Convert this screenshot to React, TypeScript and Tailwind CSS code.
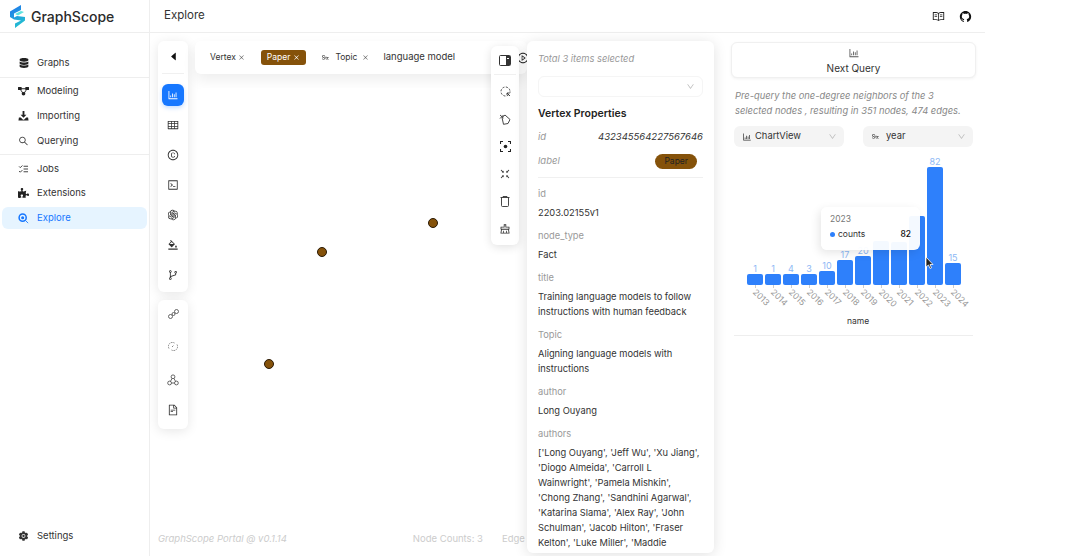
import type { ReactNode } from 'react'
import {
  AiFillSetting,
  AiOutlineBarChart,
  AiOutlineBgColors,
  AiOutlineBranches,
  AiOutlineCaretLeft,
  AiOutlineClear,
  AiOutlineClose,
  AiOutlineCode,
  AiOutlineCopyright,
  AiOutlineDown,
  AiOutlineFieldString,
  AiOutlineFileText,
  AiOutlineFullscreenExit,
  AiOutlineGithub,
  AiOutlinePlayCircle,
  AiOutlineRead,
  AiOutlineSearch,
  AiOutlineTable,
} from 'react-icons/ai'
import { FaDatabase, FaPuzzlePiece } from 'react-icons/fa'
import { PiOpenAiLogo } from 'react-icons/pi'
import { LuListChecks } from 'react-icons/lu'

const FONT = "font-['Inter','Noto_Sans',sans-serif]"

function ModelingIcon() {
  return (
    <svg width="12" height="12" viewBox="0 0 12 12" fill="#222">
      <rect x="0" y="1.500" width="4" height="3.500" rx="0.500" />
      <rect x="8" y="1.500" width="4" height="3.500" rx="0.500" />
      <circle cx="6" cy="9" r="2" />
      <path d="M3 3h6v1H3zM3.200 4.500l2.500 3.500-.8.500L2.500 5zM8.800 4.500l-2.500 3.500.8.500L9.500 5z" />
    </svg>
  )
}

function ImportIcon() {
  return (
    <svg width="12" height="12" viewBox="0 0 12 12" fill="#222">
      <path d="M5 0.500h2v4h2.200L6 8 2.800 4.500H5z" />
      <path d="M1 7.500h2L5.500 10h1L9 7.500h2l.500 3.500H.500z" />
    </svg>
  )
}

function ExploreIcon() {
  return (
    <svg width="13" height="13" viewBox="0 0 13 13" fill="none">
      <circle cx="5.500" cy="5.500" r="4.200" stroke="#1677ff" strokeWidth="1.800" />
      <circle cx="5.500" cy="5.500" r="1.800" fill="#1677ff" />
      <path d="M9 9l3 3" stroke="#1677ff" strokeWidth="1" />
    </svg>
  )
}

function LogoMark() {
  return (
    <svg width="16" height="25" viewBox="0 0 16 25" fill="none">
      <defs>
        <linearGradient id="lg" x1="0" y1="0" x2="16" y2="25" gradientUnits="userSpaceOnUse">
          <stop stopColor="#1e6cf0" />
          <stop offset="1" stopColor="#25d5c8" />
        </linearGradient>
      </defs>
      <path d="M11 1v5L4 9.500v4l3-1.500 8 1v3.500L5 24v-4.500l6-3-7-1L0 13V7.500z" fill="url(#lg)" />
      <path d="M5 10l6-3 3 1-6 3.500z" fill="#5fe3e0" />
    </svg>
  )
}

function NavItem({ icon, label, active, mt }: { icon: ReactNode; label: string; active?: boolean; mt?: string }) {
  return (
    <div
      className={`mx-[2px] flex h-[22px] items-center gap-[8px] rounded-md pl-[16px] text-[9.500px] ${mt ?? ''} ${
        active ? 'bg-[#e6f4ff] text-[#1677ff]' : 'text-[#333]'
      }`}
    >
      <span className="flex w-[11px] justify-center text-[12px]">{icon}</span>
      {label}
    </div>
  )
}

function Sidebar() {
  return (
    <aside className="flex h-full w-[150px] shrink-0 flex-col border-r border-[#eee]">
      <div className="flex h-[33px] items-center gap-[5px] border-b border-[#eee] pl-[10px]">
        <LogoMark />
        <span className="text-[14px] font-medium text-[#2b2b2b]">GraphScope</span>
      </div>
      <div className="pt-[19px]">
        <NavItem icon={<FaDatabase className="text-[10px] text-[#222]" />} label="Graphs" />
        <div className="mt-[3px] h-px bg-[#eee]" />
        <NavItem icon={<ModelingIcon />} label="Modeling" mt="mt-[2px]" />
        <NavItem icon={<ImportIcon />} label="Importing" mt="mt-[3px]" />
        <NavItem icon={<AiOutlineSearch />} label="Querying" mt="mt-[3px]" />
        <div className="mt-[2px] h-px bg-[#eee]" />
        <NavItem icon={<LuListChecks />} label="Jobs" mt="mt-[3px]" />
        <NavItem icon={<FaPuzzlePiece className="text-[#222]" />} label="Extensions" mt="mt-[2px]" />
        <NavItem icon={<ExploreIcon />} label="Explore" active mt="mt-[3px]" />
      </div>
      <div className="mt-auto mb-[9px]">
        <NavItem icon={<AiFillSetting />} label="Settings" />
      </div>
    </aside>
  )
}

function ToolIcon({ children, h = 'h-[30px]' }: { children: ReactNode; h?: string }) {
  return <div className={`flex items-center justify-center text-[12px] text-[#333] ${h}`}>{children}</div>
}

function LeftTools() {
  return (
    <div className="flex w-[30px] shrink-0 flex-col gap-[8px]">
      <div className="h-[251px] rounded-md bg-white pt-[2px] shadow-[0_2px_12px_rgba(0,0,0,0.1)]">
        <ToolIcon h="h-[27px]">
          <AiOutlineCaretLeft className="text-[11px] text-[#111]" />
        </ToolIcon>
        <div className="mx-[4px] mt-[3px] h-px bg-[#f0f0f0]" />
        <div className="mx-[4px] mt-[10px] flex h-[22px] items-center justify-center rounded-md bg-[#1677ff] text-[12px] text-white shadow-[0_2px_4px_rgba(22,119,255,0.25)]">
          <AiOutlineBarChart />
        </div>
        <div className="mt-[4px] flex flex-col">
          <ToolIcon><AiOutlineTable /></ToolIcon>
          <ToolIcon><AiOutlineCopyright /></ToolIcon>
          <ToolIcon><AiOutlineCode /></ToolIcon>
          <ToolIcon><PiOpenAiLogo /></ToolIcon>
          <ToolIcon><AiOutlineBgColors /></ToolIcon>
          <ToolIcon><AiOutlineBranches /></ToolIcon>
        </div>
      </div>
      <div className="flex h-[129px] flex-col rounded-md bg-white pt-[0px] shadow-[0_2px_12px_rgba(0,0,0,0.1)]">
        <ToolIcon h="h-[28px]">
          <svg width="11" height="10" viewBox="0 0 11 10" fill="none" stroke="#444" strokeWidth="0.8">
            <circle cx="2.500" cy="7.500" r="2" />
            <circle cx="8.500" cy="2.500" r="2" />
            <circle cx="5.500" cy="5" r="1.500" />
          </svg>
        </ToolIcon>
        <ToolIcon h="h-[36px]">
          <svg width="10" height="9" viewBox="0 0 10 9" fill="none" stroke="#666" strokeWidth="0.8" strokeDasharray="1.500 0.800">
            <path d="M1 6.500A4 4 0 0 1 6.500 1M9 2.500A4 4 0 0 1 3.500 8" />
            <path d="M4 5l2-2" />
          </svg>
        </ToolIcon>
        <ToolIcon h="h-[32px]">
          <svg width="12" height="12" viewBox="0 0 12 12" fill="none" stroke="#444" strokeWidth="0.8">
            <circle cx="6" cy="2.800" r="1.900" />
            <circle cx="2.600" cy="9" r="1.900" />
            <circle cx="9.400" cy="9" r="1.900" />
            <path d="M5 4.500L3.500 7.300M7 4.500l1.500 2.800M4.500 9h3" />
          </svg>
        </ToolIcon>
        <ToolIcon h="h-[28px]"><AiOutlineFileText /></ToolIcon>
      </div>
    </div>
  )
}

function SearchBar() {
  return (
    <div className="flex h-[33px] items-center rounded-md bg-white pl-[15px] text-[8.500px] text-[#333] shadow-[0_6px_14px_rgba(0,0,0,0.07)]">
      <span>Vertex</span>
      <AiOutlineClose className="ml-[2px] text-[7px] text-[#666]" />
      <span className="ml-[16px] flex h-[15px] items-center gap-[3px] rounded-[3px] bg-[#85520a] px-[6px] text-white">
        Paper
        <AiOutlineClose className="text-[7px]" />
      </span>
      <AiOutlineFieldString className="ml-[15px] text-[9px]" />
      <span className="ml-[5px]">Topic</span>
      <AiOutlineClose className="ml-[5px] text-[7px] text-[#666]" />
      <span className="ml-[14px] text-[9.500px]">language model</span>
      <AiOutlinePlayCircle className="ml-auto mr-[-2px] text-[12px] text-[#222]" />
    </div>
  )
}

function RightTools() {
  return (
    <div className="absolute top-[13px] left-[341px] flex w-[28px] flex-col rounded-md bg-white pb-[2px] shadow-[0_2px_10px_rgba(0,0,0,0.12)]">
      <ToolIcon h="h-[28px]">
        <svg width="12" height="11" viewBox="0 0 12 11">
          <rect x="0.500" y="0.500" width="11" height="10" rx="1" fill="#fff" stroke="#333" />
          <rect x="7" y="1" width="4" height="9" fill="#333" />
          <rect x="8" y="3" width="2" height="1" fill="#fff" />
        </svg>
      </ToolIcon>
      <div className="mx-[3px] h-px bg-[#f0f0f0]" />
      <div className="flex flex-col pt-[3px]">
        <ToolIcon h="h-[27.500px]">
          <svg width="11" height="11" viewBox="0 0 11 11" fill="none" stroke="#333" strokeWidth="0.9">
            <circle cx="5.500" cy="5.500" r="4.500" strokeDasharray="2 1.500" />
            <path d="M7 7l3 3M7 7h2M7 7v2" />
          </svg>
        </ToolIcon>
        <ToolIcon h="h-[27.500px]">
          <svg width="12" height="11" viewBox="0 0 12 11" fill="none" stroke="#333" strokeWidth="0.9">
            <path d="M3 3.500L6 1l5 4.500-2 4-4.500.8z" />
            <path d="M1 1l3.500 3M4.500 1L1 4.500" />
          </svg>
        </ToolIcon>
        <ToolIcon h="h-[27.500px]">
          <svg width="11" height="11" viewBox="0 0 11 11" fill="none" stroke="#222" strokeWidth="1.100">
            <path d="M.5 3V.5H3M8 .5h2.500V3M10.500 8v2.500H8M3 10.500H.5V8" />
            <circle cx="5.500" cy="5.500" r="1.800" fill="#222" stroke="none" />
          </svg>
        </ToolIcon>
        <ToolIcon h="h-[27.500px]"><AiOutlineFullscreenExit /></ToolIcon>
        <ToolIcon h="h-[27.500px]">
          <svg width="10" height="11" viewBox="0 0 10 11" fill="none" stroke="#333" strokeWidth="0.9">
            <path d="M0.500 1.500h9M3 1.500V.5h4v1M1.500 1.500v8a1 1 0 0 0 1 1h5a1 1 0 0 0 1-1v-8" />
          </svg>
        </ToolIcon>
        <ToolIcon h="h-[27.500px]"><AiOutlineClear /></ToolIcon>
      </div>
    </div>
  )
}

const nodes = [
  'left-[231px] top-[130px]',
  'left-[120px] top-[159px]',
  'left-[67px] top-[271px]',
]

function Canvas() {
  return (
    <div className="relative mt-[14px] mr-[3px] ml-[2px] flex-1 rounded-md bg-white">
      {nodes.map((pos) => (
        <span
          key={pos}
          className={`absolute h-[10px] w-[10px] rounded-full border border-[#2a1a05] bg-[#85520a] ${pos}`}
        />
      ))}
    </div>
  )
}

function Field({ name, children }: { name: string; children: ReactNode }) {
  return (
    <div className="mt-[8px]">
      <div className="text-[9.300px] leading-[15px] text-[#999]">{name}</div>
      <div className="mt-[4px] text-[9.300px] leading-[15px] text-[#333]">{children}</div>
    </div>
  )
}

function DetailPanel() {
  return (
    <div className="relative z-10 h-[512px] w-[187px] shrink-0 overflow-hidden rounded-md bg-white px-[11px] pt-[11px] shadow-[0_2px_14px_rgba(0,0,0,0.12)]">
      <div className="text-[9.300px] leading-[14px] text-[#999] italic">Total 3 items selected</div>
      <div className="mt-[10px] flex h-[21px] items-center justify-end rounded-md border border-[#f5f5f5] pr-[7px]">
        <AiOutlineDown className="text-[9px] text-[#bbb]" />
      </div>
      <div className="mt-[9px] text-[10.500px] leading-[16px] font-semibold text-[#222]">Vertex Properties</div>
      <div className="mt-[7px] flex h-[16px] items-center justify-between text-[9.500px] text-[#333] italic">
        <span className="text-[#999]">id</span>
        <span>432345564227567646</span>
      </div>
      <div className="mt-[8px] flex h-[16px] items-center justify-between text-[9.500px] italic">
        <span className="text-[#999]">label</span>
        <span className="mr-[6px] rounded-full bg-[#85520a] px-[9px] text-[8.500px] leading-[15px] text-[#222] not-italic">Paper</span>
      </div>
      <div className="mt-[8px] h-px bg-[#f0f0f0]" />
      <Field name="id">2203.02155v1</Field>
      <Field name="node_type">Fact</Field>
      <Field name="title">Training language models to follow instructions with human feedback</Field>
      <Field name="Topic">Aligning language models with instructions</Field>
      <Field name="author">Long Ouyang</Field>
      <Field name="authors">
        ['Long Ouyang', 'Jeff Wu', 'Xu Jiang', 'Diogo Almeida', 'Carroll L Wainwright', 'Pamela Mishkin', 'Chong
        Zhang', 'Sandhini Agarwal', 'Katarina Slama', 'Alex Ray', 'John Schulman', 'Jacob Hilton', 'Fraser Kelton',
        'Luke Miller', 'Maddie Simens']
      </Field>
    </div>
  )
}

const bars = [
  { year: '2013', value: '1', height: 11 },
  { year: '2014', value: '1', height: 11 },
  { year: '2015', value: '4', height: 11 },
  { year: '2016', value: '3', height: 11 },
  { year: '2017', value: '10', height: 14 },
  { year: '2018', value: '17', height: 25 },
  { year: '2019', value: '20', height: 29 },
  { year: '2020', value: '', height: 44 },
  { year: '2021', value: '', height: 43 },
  { year: '2022', value: '', height: 69 },
  { year: '2023', value: '82', height: 118 },
  { year: '2024', value: '15', height: 22 },
]

function Chart() {
  return (
    <div className="relative mt-[6px] ml-[3px] h-[183px] w-[239px] border-b border-[#eee]">
      <div className="absolute top-[0px] left-[13px] flex h-[132px] items-end gap-[2px]">
        {bars.map((b) => (
          <div key={b.year} className="flex w-[16px] flex-col items-center">
            <span className="text-[9px] leading-[11px] text-[#8db8f5]">{b.value}</span>
            <div className="w-full rounded-[2px] bg-[#2e80fb]" style={{ height: b.height }} />
          </div>
        ))}
      </div>
      <div className="absolute top-[132px] left-[13px] flex gap-[2px]">
        {bars.map((b) => (
          <div key={b.year} className="relative h-[30px] w-[16px]">
            <span className="absolute top-0 left-1/2 h-[3px] w-px bg-[#ccc]" />
            <span className="absolute top-[2px] left-[11px] origin-top-left rotate-45 text-[8.500px] leading-[10px] text-[#999]">
              {b.year}
            </span>
          </div>
        ))}
      </div>
      <div className="absolute top-[162px] right-0 left-[9px] text-center text-[8.500px] leading-[12px] text-[#333]">name</div>
      <div className="absolute top-[54px] left-[87px] h-[43px] w-[99px] rounded-md bg-white/95 px-[9px] pt-[6px] text-[8.500px] shadow-[-2px_3px_10px_rgba(0,0,0,0.1)]">
        <div className="leading-[12px] text-[#777]">2023</div>
        <div className="mt-[3px] flex items-center leading-[12px] text-[#333]">
          <span className="mr-[3px] h-[5px] w-[5px] rounded-full bg-[#2e80fb]" />
          counts
          <span className="ml-auto font-medium text-[#111]">82</span>
        </div>
      </div>
      <svg className="absolute top-[103px] left-[191px]" width="9" height="13" viewBox="0 0 9 13">
        <path d="M1 1v10l2.500-2 1.500 3.500 1.500-.7L5 8.500h3z" fill="#222" stroke="#fff" strokeWidth="0.8" />
      </svg>
    </div>
  )
}

function SelectBox({ children }: { children: ReactNode }) {
  return (
    <div className="flex h-[21px] w-[110px] items-center gap-[3px] rounded-md bg-[#f4f4f4] pr-[7px] pl-[8px] text-[9.400px] text-[#333]">
      {children}
      <AiOutlineDown className="ml-auto text-[9px] text-[#bbb]" />
    </div>
  )
}

function RightPanel() {
  return (
    <div className="h-full w-[255px] shrink-0 pt-[9px] pl-[1px]">
      <div className="flex h-[36px] w-[245px] flex-col items-center justify-center rounded-md border border-[#f0f0f0] bg-white pt-[2px] text-[#333] shadow-[0_1px_3px_rgba(0,0,0,0.06)]">
        <AiOutlineBarChart className="text-[12px] text-[#555]" />
        <span className="mt-[3px] text-[10px] leading-[13px]">Next Query</span>
      </div>
      <p className="mt-[10px] ml-[4px] text-[9.340px] leading-[15px] text-[#888] italic">
        Pre-query the one-degree neighbors of the 3
        <br />
        selected nodes , resulting in 351 nodes, 474 edges.
      </p>
      <div className="mt-[8px] ml-[3px] flex w-[239px] justify-between">
        <SelectBox>
          <AiOutlineBarChart className="text-[10px]" />
          ChartView
        </SelectBox>
        <SelectBox>
          <AiOutlineFieldString className="mr-[3px] text-[9px]" />
          year
        </SelectBox>
      </div>
      <Chart />
    </div>
  )
}

export default function App() {
  return (
    <div className={`flex h-[556px] w-[1080px] overflow-hidden bg-white ${FONT}`}>
      <Sidebar />
      <div className="flex h-full w-[835px] shrink-0 flex-col">
        <header className="flex h-[33px] shrink-0 items-center border-b border-[#eee] pr-[13px] pl-[14px]">
          <span className="text-[11.500px] text-[#333]">Explore</span>
          <AiOutlineRead className="ml-auto text-[13px] text-[#222]" />
          <AiOutlineGithub className="ml-[14px] text-[13px] text-[#111]" />
        </header>
        <main className="flex min-h-0 flex-1">
          <section className="relative flex h-full w-[580px] shrink-0 items-start pt-[8px] pl-[8px]">
            <LeftTools />
            <div className="ml-[7px] flex h-[505px] w-[332px] shrink-0 flex-col">
              <SearchBar />
              <Canvas />
              <div className="mt-[2px] -ml-[37px] flex h-[14px] items-center text-[9.500px] whitespace-nowrap text-[#ccc]">
                <span className="italic">GraphScope Portal @ v0.1.14</span>
                <span className="ml-[126px]">Node Counts: 3</span>
                <span className="ml-[19px]">Edge Counts: 0</span>
              </div>
            </div>
            <RightTools />
            <DetailPanel />
          </section>
          <RightPanel />
        </main>
      </div>
    </div>
  )
}
